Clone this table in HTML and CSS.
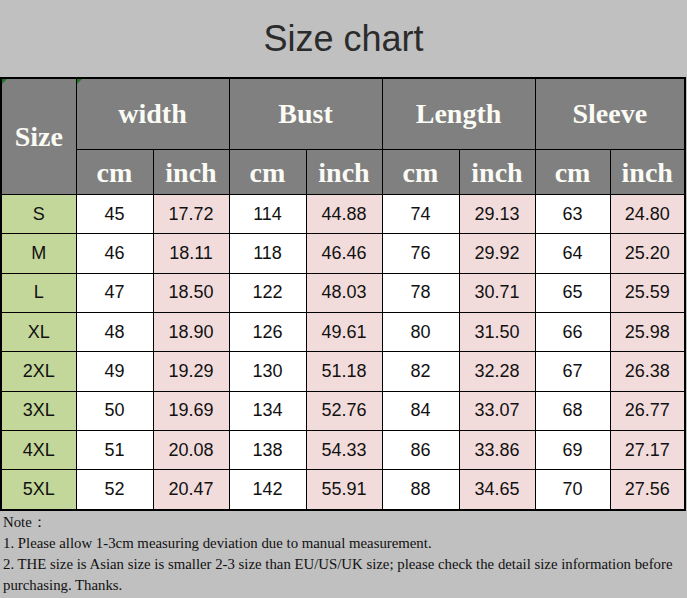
FILE: index.html
```html
<!DOCTYPE html>
<html>
<head>
<meta charset="utf-8">
<link rel="stylesheet" href="styles.css">
</head>
<body>
<div class="page">
  <div class="title">Size chart</div>
  <table class="chart">
    <colgroup>
      <col class="c-size"><col class="c-a"><col class="c-b"><col class="c-a"><col class="c-b"><col class="c-a"><col class="c-b"><col class="c-c"><col class="c-c">
    </colgroup>
    <thead>
      <tr class="h1">
        <th rowspan="2" class="mark-cell">Size<span class="mark"></span></th>
        <th colspan="2" class="mark-cell">width<span class="mark"></span></th>
        <th colspan="2">Bust</th>
        <th colspan="2">Length</th>
        <th colspan="2">Sleeve</th>
      </tr>
      <tr class="h2">
        <th>cm</th><th>inch</th><th>cm</th><th>inch</th><th>cm</th><th>inch</th><th>cm</th><th>inch</th>
      </tr>
    </thead>
    <tbody>
      <tr><td class="sz">S</td><td>45</td><td class="in">17.72</td><td>114</td><td class="in">44.88</td><td>74</td><td class="in">29.13</td><td>63</td><td class="in">24.80</td></tr>
      <tr><td class="sz">M</td><td>46</td><td class="in">18.11</td><td>118</td><td class="in">46.46</td><td>76</td><td class="in">29.92</td><td>64</td><td class="in">25.20</td></tr>
      <tr><td class="sz">L</td><td>47</td><td class="in">18.50</td><td>122</td><td class="in">48.03</td><td>78</td><td class="in">30.71</td><td>65</td><td class="in">25.59</td></tr>
      <tr><td class="sz">XL</td><td>48</td><td class="in">18.90</td><td>126</td><td class="in">49.61</td><td>80</td><td class="in">31.50</td><td>66</td><td class="in">25.98</td></tr>
      <tr><td class="sz">2XL</td><td>49</td><td class="in">19.29</td><td>130</td><td class="in">51.18</td><td>82</td><td class="in">32.28</td><td>67</td><td class="in">26.38</td></tr>
      <tr><td class="sz">3XL</td><td>50</td><td class="in">19.69</td><td>134</td><td class="in">52.76</td><td>84</td><td class="in">33.07</td><td>68</td><td class="in">26.77</td></tr>
      <tr><td class="sz">4XL</td><td>51</td><td class="in">20.08</td><td>138</td><td class="in">54.33</td><td>86</td><td class="in">33.86</td><td>69</td><td class="in">27.17</td></tr>
      <tr><td class="sz">5XL</td><td>52</td><td class="in">20.47</td><td>142</td><td class="in">55.91</td><td>88</td><td class="in">34.65</td><td>70</td><td class="in">27.56</td></tr>
    </tbody>
  </table>
  <div class="notes">
    <p>Note：</p>
    <p>1. Please allow 1-3cm measuring deviation due to manual measurement.</p>
    <p>2. THE size is Asian size is smaller 2-3 size than EU/US/UK size; please check the detail size information before purchasing. Thanks.</p>
  </div>
</div>
</body>
</html>
```
FILE: styles.css
```css
html, body {
  margin: 0;
  padding: 0;
  background: #c0c0c0;
}
.page {
  width: 687px;
  height: 598px;
  background: #c0c0c0;
  overflow: hidden;
}
.title {
  height: 77px;
  box-sizing: border-box;
  padding-top: 15px;
  text-align: center;
  font-family: "Liberation Sans", Arial, sans-serif;
  font-size: 36px;
  line-height: 48px;
  color: #2b2b2b;
}
.chart {
  border-collapse: collapse;
  table-layout: fixed;
  width: 684px;
  border: 2px solid #000;
  margin-left: 0;
}
.c-size { width: 75px; }
.c-a { width: 77px; }
.c-b { width: 76px; }
.c-c { width: 75px; }
.chart th, .chart td {
  border: 1px solid #000;
  padding: 0;
  text-align: center;
}
.chart th {
  background: #808080;
  color: #fbfbf5;
  font-family: "Liberation Serif", "Times New Roman", serif;
  font-weight: bold;
  font-size: 28px;
}
.h1 th { height: 70px; }
.h2 th { height: 43px; padding-top: 1px; }
.mark-cell { position: relative; }
.mark {
  position: absolute;
  left: 0;
  top: 0;
  width: 0;
  height: 0;
  border-top: 5px solid #1f7a1f;
  border-right: 5px solid transparent;
}
.chart td {
  height: 38.35px;
  background: #fff;
  color: #111;
  font-family: "Liberation Sans", Arial, sans-serif;
  font-size: 18px;
}
.chart td.sz { background: #c4d79b; }
.chart td.in { background: #f2dcdb; }
.notes {
  padding: 1px 0 0 3px;
  font-family: "Liberation Serif", "Times New Roman", serif;
  font-size: 14.8px;
  line-height: 21px;
  color: #111;
}
.notes p { margin: 0; }
```
